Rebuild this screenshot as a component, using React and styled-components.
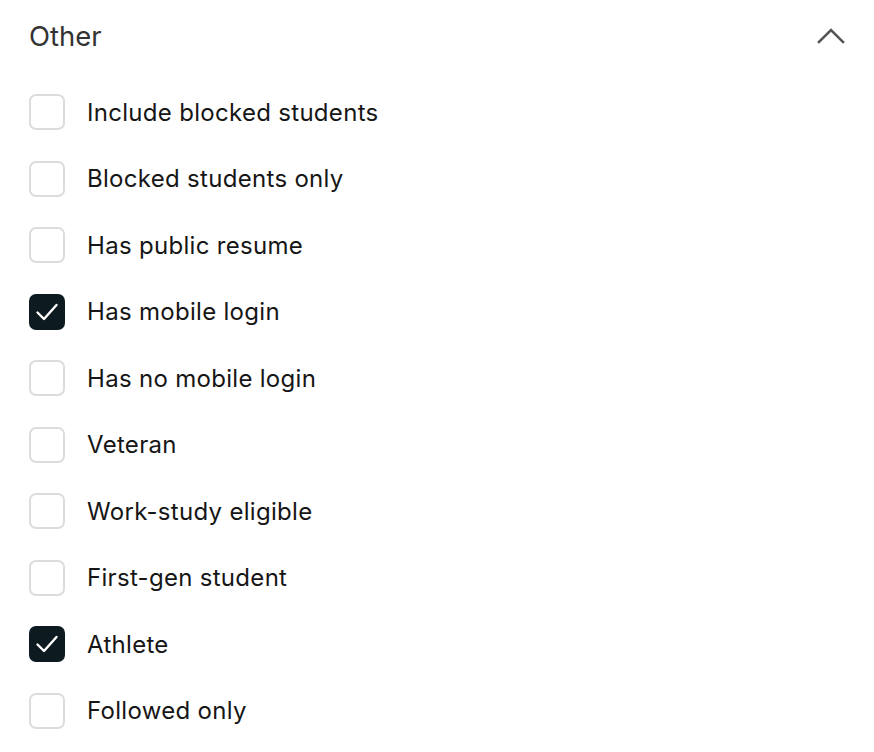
import React, { useState } from "react";
import styled, { createGlobalStyle } from "styled-components";

const Global = createGlobalStyle`
  html, body { margin: 0; padding: 0; background: #fff; }
  body { font-family: Inter, "Noto Sans", sans-serif; -webkit-font-smoothing: antialiased; }
`;

const Panel = styled.section`
  width: 874px;
  box-sizing: border-box;
  padding: 14px 28px 0 29px;
`;

const Header = styled.div`
  display: flex;
  align-items: center;
  justify-content: space-between;
  height: 44px;
`;

const Title = styled.h2`
  margin: 0;
  font-size: 27.5px;
  font-weight: 400;
  color: #333;
  letter-spacing: 0;
`;

const Toggle = styled.button`
  border: 0;
  background: none;
  padding: 0;
  width: 30px;
  height: 30px;
  display: flex;
  align-items: center;
  justify-content: center;
  cursor: pointer;
`;

const List = styled.ul`
  list-style: none;
  margin: 36px 0 0 0;
  padding: 0;
  display: flex;
  flex-direction: column;
  gap: 30.5px;
`;

const Row = styled.li`
  display: flex;
  align-items: center;
  gap: 22px;
  height: 36px;
  cursor: pointer;
`;

const Box = styled.span`
  width: 36px;
  height: 36px;
  box-sizing: border-box;
  border-radius: 7px;
  border: ${(p) => (p.$checked ? "none" : "2px solid #dcdcdc")};
  background: ${(p) => (p.$checked ? "#0d1b20" : "#fff")};
  display: flex;
  align-items: center;
  justify-content: center;
  flex: none;
`;

const Label = styled.span`
  font-size: 24px;
  color: #161616;
  letter-spacing: 0.3px;
`;

const items = [
  ["Include blocked students", false],
  ["Blocked students only", false],
  ["Has public resume", false],
  ["Has mobile login", true],
  ["Has no mobile login", false],
  ["Veteran", false],
  ["Work-study eligible", false],
  ["First-gen student", false],
  ["Athlete", true],
  ["Followed only", false],
];

export default function App() {
  const [state, setState] = useState(items.map((i) => i[1]));
  return (
    <>
      <Global />
      <Panel>
        <Header>
          <Title>Other</Title>
          <Toggle aria-label="Collapse">
            <svg width="28" height="16" viewBox="0 0 28 16" fill="none">
              <path d="M2 14 L14 2 L26 14" stroke="#555" strokeWidth="2.6" strokeLinecap="square" />
            </svg>
          </Toggle>
        </Header>
        <List>
          {items.map(([label], i) => (
            <Row key={label} onClick={() => setState((s) => s.map((v, j) => (j === i ? !v : v)))}>
              <Box $checked={state[i]}>
                {state[i] && (
                  <svg width="24" height="20" viewBox="0 0 24 20" fill="none">
                    <path d="M2.5 10.5 L9 17 L21.5 3" stroke="#fff" strokeWidth="2.4" strokeLinecap="round" strokeLinejoin="round" />
                  </svg>
                )}
              </Box>
              <Label>{label}</Label>
            </Row>
          ))}
        </List>
      </Panel>
    </>
  );
}
